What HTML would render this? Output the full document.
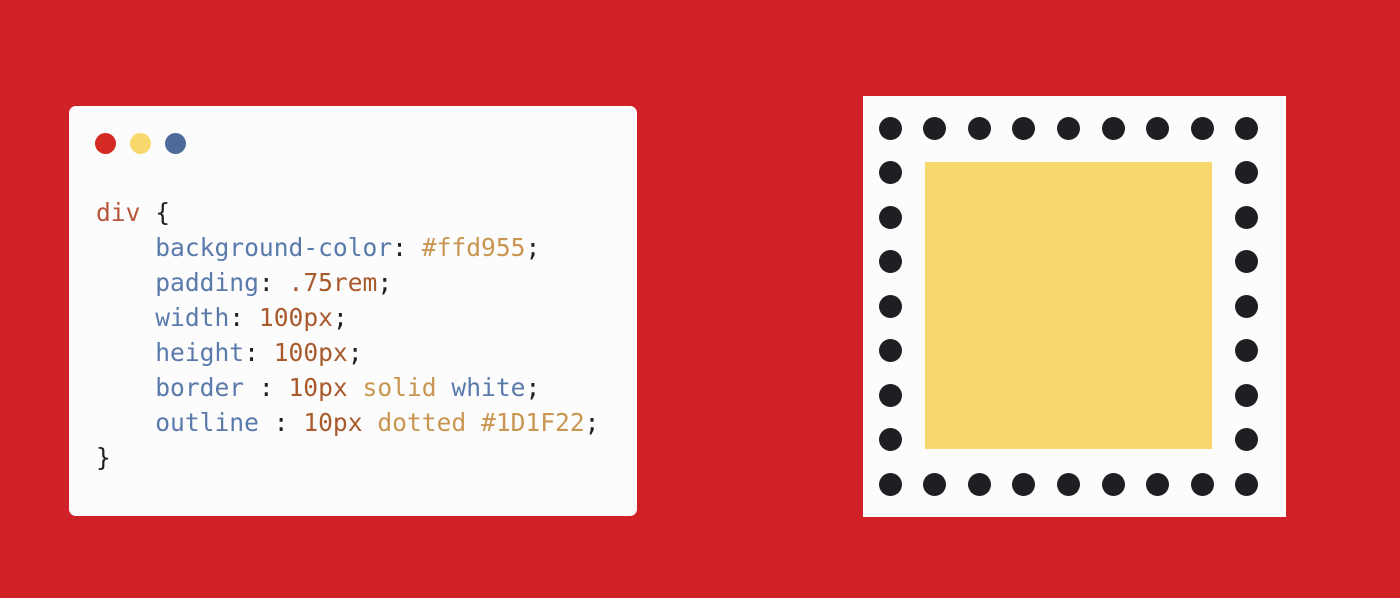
<!DOCTYPE html>
<html><head><meta charset="utf-8"><style>
html,body{margin:0;padding:0;}
body{width:1400px;height:598px;background:#d12128;position:relative;overflow:hidden;}
.card{position:absolute;left:69px;top:106px;width:568px;height:410px;background:#fcfcfc;border-radius:7px;}
.tl{position:absolute;top:133px;width:21px;height:21px;border-radius:50%;}
pre{position:absolute;left:96px;top:195px;margin:0;font-family:"DejaVu Sans Mono","Liberation Mono",monospace;font-size:24.6px;line-height:35px;color:#1d1f22;}
.k{color:#b8553a}.p{color:#5a7aab}.v{color:#c89650}.n{color:#a85a2c}
.box{position:absolute;left:863px;top:96px;width:423px;height:421px;background:#fcfcfc;}
.y{position:absolute;left:925px;top:162px;width:287px;height:287px;background:#f8d86c;}
.d{position:absolute;width:23px;height:23px;border-radius:50%;background:#1d1f22;}
</style></head><body>
<div class="card"></div>
<div class="tl" style="left:95px;background:#d52a23"></div>
<div class="tl" style="left:130px;background:#f8d86c"></div>
<div class="tl" style="left:165px;background:#4d6a9a"></div>
<pre><span class="k">div</span> {
    <span class="p">background-color</span>: <span class="v">#ffd955</span>;
    <span class="p">padding</span>: <span class="n">.75rem</span>;
    <span class="p">width</span>: <span class="n">100px</span>;
    <span class="p">height</span>: <span class="n">100px</span>;
    <span class="p">border</span> : <span class="n">10px</span> <span class="v">solid</span> <span class="p">white</span>;
    <span class="p">outline</span> : <span class="n">10px</span> <span class="v">dotted</span> <span class="v">#1D1F22</span>;
}</pre>
<div class="box"></div>
<div class="y"></div>
<div id="dots"></div>
<script>
var h='';for(var i=0;i<9;i++){for(var j=0;j<9;j++){if(i==0||i==8||j==0||j==8){var x=890+i*44.6-11.5,y=128+j*44.5-11.5;h+='<div class="d" style="left:'+x+'px;top:'+y+'px"></div>';}}}
document.getElementById('dots').innerHTML=h;
</script>
</body></html>
